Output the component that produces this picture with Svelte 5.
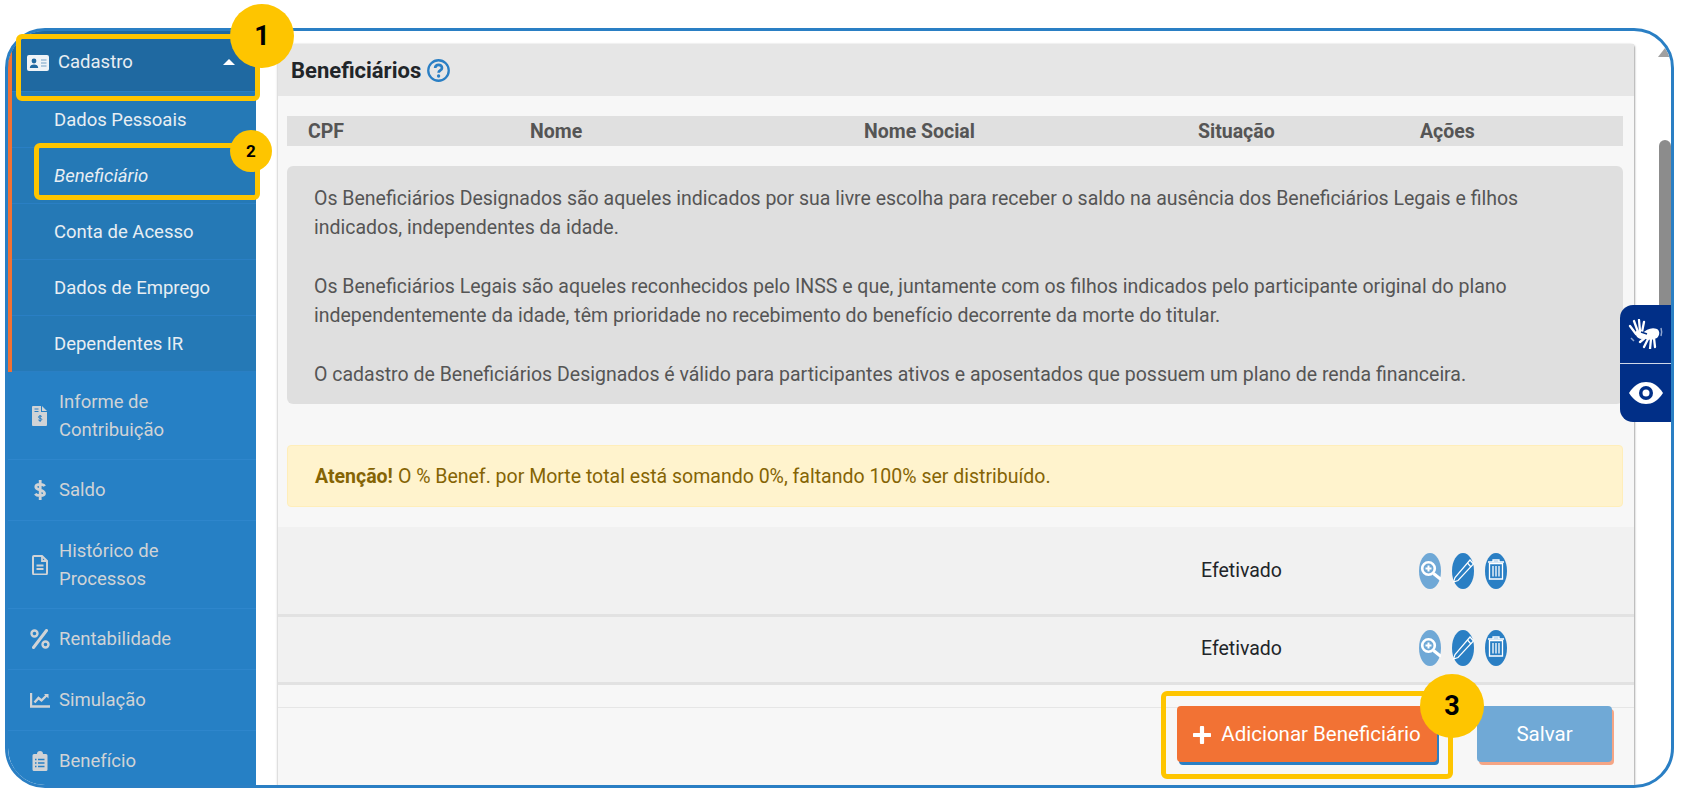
<script>
    const submenu = ["Dados Pessoais", "Beneficiário", "Conta de Acesso", "Dados de Emprego", "Dependentes IR"];
    const menu = [
        { id: "invoice", lines: ["Informe de", "Contribuição"] },
        { id: "dollar", lines: ["Saldo"] },
        { id: "file", lines: ["Histórico de", "Processos"] },
        { id: "percent", lines: ["Rentabilidade"] },
        { id: "chart", lines: ["Simulação"] },
        { id: "clipboard", lines: ["Benefício"] },
    ];
    const rows = ["Efetivado", "Efetivado"];
</script>

<div class="frame">
    <aside class="sidebar">
        <div class="open-group">
            <div class="cadastro">
                <svg class="id-card" viewBox="0 0 22 16">
                    <rect width="22" height="16" rx="2" fill="#eef3f7" />
                    <circle cx="7" cy="6" r="2.4" fill="#1f69a1" />
                    <path d="M2.8 13c0-2.6 1.8-3.6 4.2-3.6s4.2 1 4.2 3.6z" fill="#1f69a1" />
                    <path d="M14 5h5.5M14 8h5.5M14 11h5.5" stroke="#9dbdd6" stroke-width="1.4" />
                </svg>
                <span>Cadastro</span>
                <i class="caret"></i>
            </div>
            {#each submenu as item, i}
                <div class="sub" class:active={i === 1}>{item}</div>
            {/each}
        </div>
        {#each menu as m}
            <div class="item" class:two={m.lines.length > 1}>
                <svg class="mi" viewBox="0 0 20 20">
                    {#if m.id === "invoice"}
                        <path d="M3 0h8v6h6v13a1 1 0 0 1-1 1H3a1 1 0 0 1-1-1V1a1 1 0 0 1 1-1zM12 0l5 5h-5z" fill="#d0d3d6" />
                        <path d="M4.500 3h4M4.500 5.500h4" stroke="#2a7fc4" stroke-width="1" />
                        <path d="M11.800 10.500c-.6-.8-3.400-.8-3.400.6s3.400.8 3.400 2.300-2.900 1.500-3.500.5M10.100 9v7" stroke="#2a7fc4" stroke-width="1" fill="none" />
                    {:else if m.id === "dollar"}
                        <path d="M14.500 6.200C13.500 3.800 5.800 3.600 5.800 7c0 3.700 8.700 2.300 8.700 6.200 0 3.300-7.700 3-9.200.6M10.200 0v20" stroke="#d0d3d6" stroke-width="2.800" fill="none" />
                    {:else if m.id === "file"}
                        <path d="M4 1h8l5 5v12a1.500 1.500 0 0 1-1.500 1.500h-11A1.500 1.500 0 0 1 3 18V2a1 1 0 0 1 1-1z" stroke="#d0d3d6" stroke-width="2" fill="none" />
                        <path d="M6.500 10.500h7M6.500 14h7M12 1v5h5" stroke="#d0d3d6" stroke-width="1.800" fill="none" />
                    {:else if m.id === "percent"}
                        <circle cx="4.500" cy="4.500" r="3" stroke="#d0d3d6" stroke-width="2.400" fill="none" />
                        <circle cx="15.500" cy="15.500" r="3" stroke="#d0d3d6" stroke-width="2.400" fill="none" />
                        <path d="M16.500 1.500 3.500 18.500" stroke="#d0d3d6" stroke-width="3" stroke-linecap="round" />
                    {:else if m.id === "chart"}
                        <path d="M1 3v13.500h19" stroke="#d0d3d6" stroke-width="2.400" fill="none" />
                        <path d="M4.500 12.500 8.500 8l3 2.500L17 5" stroke="#d0d3d6" stroke-width="2.400" fill="none" />
                        <path d="M14 4h4.500v4.500z" fill="#d0d3d6" />
                    {:else}
                        <path d="M4 3h3a3 3 0 0 1 6 0h3a1.500 1.500 0 0 1 1.500 1.500v14A1.500 1.500 0 0 1 16 20H4a1.500 1.500 0 0 1-1.500-1.500v-14A1.500 1.500 0 0 1 4 3z" fill="#d0d3d6" />
                        <path d="M8 8.500h6.500M8 12h6.500M8 15.500h6.500M5 8.500h1.500M5 12h1.500M5 15.500h1.500" stroke="#2680c5" stroke-width="1.300" />
                    {/if}
                </svg>
                <span>{#each m.lines as l}<div>{l}</div>{/each}</span>
            </div>
        {/each}
    </aside>

    <main class="content">
        <section class="card">
            <header class="card-head">
                <h2>Beneficiários</h2>
                <svg class="help" viewBox="0 0 22 22">
                    <circle cx="11" cy="11" r="9.800" fill="none" stroke="#2a7fc4" stroke-width="2.200" />
                    <path d="M7.800 8.600c.2-4 6.600-4 6.500-.1 0 2.500-3.200 2.200-3.200 4.600" fill="none" stroke="#2a7fc4" stroke-width="2.600" />
                    <circle cx="11.100" cy="16.300" r="1.600" fill="#2a7fc4" />
                </svg>
            </header>
            <div class="card-body">
                <div class="thead">
                    <span class="c-cpf">CPF</span>
                    <span class="c-nome">Nome</span>
                    <span class="c-social">Nome Social</span>
                    <span class="c-sit">Situação</span>
                    <span>Ações</span>
                </div>
                <div class="info">
                    <p>Os Beneficiários Designados são aqueles indicados por sua livre escolha para receber o saldo na ausência dos Beneficiários Legais e filhos indicados, independentes da idade.</p>
                    <p>Os Beneficiários Legais são aqueles reconhecidos pelo INSS e que, juntamente com os filhos indicados pelo participante original do plano independentemente da idade, têm prioridade no recebimento do benefício decorrente da morte do titular.</p>
                    <p>O cadastro de Beneficiários Designados é válido para participantes ativos e aposentados que possuem um plano de renda financeira.</p>
                </div>
                <div class="alert"><b>Atenção!</b> O % Benef. por Morte total está somando 0%, faltando 100% ser distribuído.</div>
            </div>
            <div class="rows">
                {#each rows as r}
                    <div class="row">
                        <span class="status">{r}</span>
                        <div class="actions">
                            <span class="act light">
                                <svg viewBox="0 0 22 36">
                                    <circle cx="9.500" cy="15.500" r="6.300" fill="none" stroke="#fff" stroke-width="2.600" />
                                    <path d="M14.500 20.500 22 26.500" stroke="#fff" stroke-width="3.200" />
                                    <path d="M6.500 15.500h6M9.500 12.500v6" stroke="#fff" stroke-width="2" />
                                </svg>
                            </span>
                            <span class="act">
                                <svg viewBox="0 0 22 36">
                                    <path d="M18 7 21.500 11 6 27.500 1.500 29 3 24.500z" fill="none" stroke="#fff" stroke-width="1.200" />
                                    <path d="M15.500 10 19 14" stroke="#fff" stroke-width="1.200" />
                                </svg>
                            </span>
                            <span class="act">
                                <svg viewBox="0 0 22 36">
                                    <path d="M3 9h16M8 9V7h6v2" fill="none" stroke="#fff" stroke-width="1.300" />
                                    <path d="M4.500 10.500h13V26H4.500z" fill="none" stroke="#fff" stroke-width="1.300" />
                                    <path d="M8 13v10.500M11 13v10.500M14 13v10.500" stroke="#fff" stroke-width="1.300" />
                                </svg>
                            </span>
                        </div>
                    </div>
                {/each}
            </div>
            <footer class="foot">
                <button class="btn add">
                    <svg class="plus" viewBox="0 0 18 18"><path d="M9 1.500v15M1.500 9h15" stroke="#fff" stroke-width="4.200" stroke-linecap="round" /></svg>
                    Adicionar Beneficiário
                </button>
                <button class="btn save">Salvar</button>
            </footer>
        </section>
        <div class="scroll">
            <i class="up"></i>
            <i class="thumb"></i>
        </div>
    </main>

    <div class="vlibras">
        <div class="vl-btn">
            <svg viewBox="0 0 36 30" width="36" height="30">
                <path d="M2 7l6 8M6 2l4 11M11 1l1 11M16 3l-2 10" fill="none" stroke="#fff" stroke-width="2.300" stroke-linecap="round" />
                <path d="M8 12c-1 3 0 7 5 8 3 0 5-1 7-3l-7-4z" fill="#fff" />
                <path d="M14 15c4-5 10-7 15-5 3 2 3 6 0 9l-6 2-5-1z" fill="#fff" />
                <path d="M13 13l6 2" stroke="#012f87" stroke-width="1.500" />
                <path d="M26 19l1 9M23 20l-1 10M20 20l-4 8M18 18l-6 5" fill="none" stroke="#fff" stroke-width="2.300" stroke-linecap="round" />
                <path d="M33 9c1 3 1 5 0 8" fill="none" stroke="#8fa5cf" stroke-width="1.500" />
                <path d="M3 19l3 3" stroke="#8fa5cf" stroke-width="1.500" />
            </svg>
        </div>
        <div class="vl-btn eye">
            <svg viewBox="0 0 34 22" width="34" height="22">
                <path d="M0 11C5 3 11 0 17 0s12 3 17 11c-5 8-11 11-17 11S5 19 0 11z" fill="#fff" />
                <circle cx="17" cy="11" r="7" fill="#012f87" />
                <circle cx="17" cy="11" r="3.500" fill="#fff" />
            </svg>
        </div>
    </div>

    <div class="mark m1"></div>
    <div class="mark m2"></div>
    <div class="mark m3"></div>
    <div class="badge b1">1</div>
    <div class="badge b2">2</div>
    <div class="badge b3">3</div>
</div>

<style>
    :global(body) {
        margin: 0;
        background: #fff;
        font-family: Roboto, sans-serif;
    }

    .frame {
        box-sizing: border-box;
        position: relative;
        display: flex;
        width: 1669px;
        height: 760px;
        margin: 28px 0 0 5px;
        border: 3px solid #2a7fc4;
        border-radius: 40px;
        background: #fff;
    }

    .sidebar {
        width: 248px;
        flex: none;
        background: #2680c5;
        border-radius: 37px 0 0 37px;
        overflow: hidden;
        color: #d0d3d6;
        font-size: 18.500px;
    }

    .open-group {
        border-left: 4px solid #f27234;
        background: #2579b6;
        color: #e8eef3;
    }

    .cadastro {
        display: flex;
        align-items: flex-start;
        box-sizing: border-box;
        height: 61px;
        padding: 20px 21px 0 14px;
        background: #1f69a1;
        border-bottom: 1px solid #2a7fc4;
        color: #e8eef3;
    }

    .id-card {
        width: 22px;
        height: 16px;
        margin: 4px 9px 0 1px;
    }

    .caret {
        margin: 8px 0 0 auto;
        border: 6px solid transparent;
        border-top: 0;
        border-bottom-color: #fff;
    }

    .sub {
        box-sizing: border-box;
        height: 56px;
        padding-left: 42px;
        line-height: 56px;
        border-bottom: 1px solid #2a7fc4;
    }

    .active {
        font-style: italic;
    }

    .item {
        display: flex;
        align-items: center;
        box-sizing: border-box;
        height: 61px;
        padding-left: 22px;
        border-bottom: 1px solid #2e86cc;
    }

    .item.two {
        height: 88px;
        line-height: 28px;
    }

    .mi {
        width: 20px;
        height: 20px;
        flex: none;
        margin-right: 9px;
    }

    .content {
        flex: 1;
        display: flex;
        min-width: 0;
        padding: 13px 0 0 22px;
        overflow: hidden;
        border-radius: 0 37px 37px 0;
    }

    .card {
        box-sizing: border-box;
        width: 1356px;
        height: 745px;
        flex: none;
        display: flex;
        flex-direction: column;
        background: #f7f7f7;
        border-radius: 3px;
        box-shadow: 1px 1px 2px #a8a8a8, -1px 0 2px #d8d8d8;
        color: #555;
    }

    .card-head {
        display: flex;
        align-items: center;
        gap: 6px;
        height: 52px;
        flex: none;
        padding-left: 13px;
        background: #e6e6e6;
    }

    h2 {
        margin: 0;
        font-size: 22px;
        font-weight: 700;
        color: #212529;
    }

    .help {
        width: 23px;
        height: 23px;
    }

    .card-body {
        padding: 20px 11px 20px 9px;
    }

    .thead {
        display: flex;
        align-items: center;
        height: 30px;
        padding-left: 21px;
        background: #e0e0e0;
        font-size: 19.500px;
        font-weight: 700;
        color: #555;
    }

    .c-cpf { width: 222px; }
    .c-nome { width: 334px; }
    .c-social { width: 334px; }
    .c-sit { width: 222px; }

    .info {
        box-sizing: border-box;
        height: 238px;
        margin-top: 20px;
        padding: 18px 20px 0 27px;
        background: #dfdfdf;
        border-radius: 6px;
        font-size: 19.500px;
        line-height: 29px;
        color: #555;
    }

    .info p {
        margin: 0 0 30px;
    }

    .alert {
        display: flex;
        align-items: center;
        gap: 5px;
        height: 62px;
        box-sizing: border-box;
        margin-top: 41px;
        padding-left: 27px;
        background: #fff3cd;
        border: 1px solid #ffeeba;
        border-radius: 4px;
        font-size: 19.500px;
        color: #856404;
    }

    .rows {
        background: #f1f1f1;
    }

    .row {
        display: flex;
        align-items: center;
        height: 87px;
        padding-left: 923px;
        border-bottom: 3px solid #e2e2e2;
        font-size: 19.500px;
        color: #212529;
    }

    .row + .row {
        height: 68px;
        margin-top: -3px;
    }

    .status {
        width: 218px;
    }

    .actions {
        display: flex;
        gap: 11px;
    }

    .act {
        display: block;
        width: 22px;
        height: 36px;
        background: #2a7fc4;
        border-radius: 50%;
    }

    .act svg {
        display: block;
    }

    .light {
        background: #6fa8d6;
    }

    .foot {
        position: relative;
        display: flex;
        justify-content: flex-end;
        gap: 40px;
        padding: 21px 22px 0 0;
        flex: 1;
    }

    .foot::before {
        content: "";
        position: absolute;
        left: 0;
        right: 0;
        top: 22px;
        border-top: 1px solid #e6e6e6;
    }

    .btn {
        position: relative;
        height: 56px;
        border: 0;
        border-radius: 4px;
        font-family: inherit;
        font-size: 20.500px;
        color: #fff;
    }

    .add {
        width: 260px;
        background: #f27234;
        box-shadow: 2px 3px 0 #2a7fc4;
    }

    .plus {
        width: 18px;
        height: 18px;
        margin-right: 5px;
        vertical-align: -3px;
    }

    .save {
        width: 135px;
        background: #70a9d6;
        box-shadow: 2px 3px 0 #f5a585;
    }

    .scroll {
        position: relative;
        flex: 1;
    }

    .up {
        position: absolute;
        top: 4px;
        left: 24px;
        border: 7px solid transparent;
        border-top: 0;
        border-bottom: 9px solid #a0a0a0;
    }

    .thumb {
        position: absolute;
        top: 96px;
        height: 281px;
        left: 25px;
        width: 12px;
        border-radius: 6px;
        background: #8c8c8c;
    }

    .vlibras {
        position: absolute;
        right: 0;
        top: 274px;
        width: 51px;
        border-radius: 13px 0 0 13px;
        overflow: hidden;
        background: #012f87;
    }

    .vl-btn {
        display: flex;
        align-items: center;
        justify-content: center;
        height: 58px;
    }

    .vl-btn.eye {
        border-top: 1px solid #cfd8e8;
    }

    .mark {
        position: absolute;
        box-sizing: border-box;
        border: 5px solid #fec500;
        border-radius: 6px;
    }

    .m1 { left: 8px; top: 3px; width: 244px; height: 67px; }
    .m2 { left: 26px; top: 112px; width: 226px; height: 57px; }
    .m3 { left: 1153px; top: 660px; width: 292px; height: 88px; }

    .badge {
        position: absolute;
        display: flex;
        align-items: center;
        justify-content: center;
        border-radius: 50%;
        background: #fec500;
        font-weight: 700;
        color: #000;
        font-size: 27px;
    }

    .b1 { left: 222px; top: -27px; width: 64px; height: 64px; }
    .b2 { left: 222px; top: 99px; width: 42px; height: 42px; font-size: 17px; }
    .b3 { left: 1412px; top: 643px; width: 64px; height: 64px; }
</style>
